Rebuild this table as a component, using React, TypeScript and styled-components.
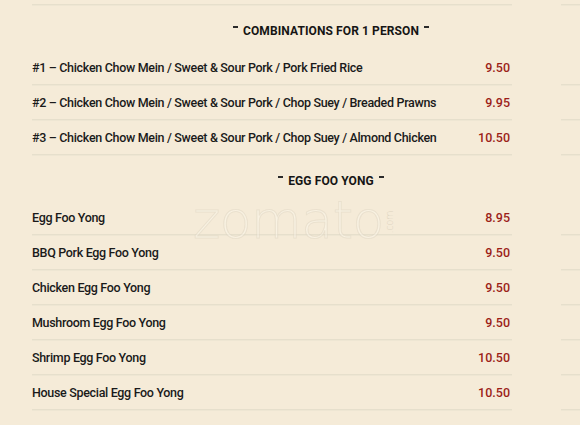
import styled, { createGlobalStyle } from 'styled-components'

const GlobalStyle = createGlobalStyle`
  html, body {
    margin: 0;
    padding: 0;
    background: #f5ebd8;
  }
  body {
    font-family: Roboto, 'Liberation Sans', sans-serif;
    overflow: hidden;
  }
`

const Page = styled.div`
  position: relative;
  width: 580px;
  height: 425px;
  padding-top: 4px;
  box-sizing: border-box;
  overflow: hidden;
`

const RuleRow = styled.div`
  display: flex;
  padding-left: 32px;
`

const Line = styled.div<{ $side?: boolean }>`
  height: 1px;
  background: #e6dfcc;
  box-shadow: 0 1px 0 #eee6d3;
  margin-bottom: 1px;
  width: ${(p) => (p.$side ? 'auto' : '480px')};
  flex: ${(p) => (p.$side ? '1' : 'none')};
  margin-left: ${(p) => (p.$side ? '49px' : '0')};
`

const Heading = styled.h2`
  margin: 0;
  height: 45px;
  box-sizing: border-box;
  padding: 18px 0 0 82px;
  text-align: center;
  font-size: 12px;
  line-height: 14px;
  font-weight: 700;
  color: #151515;
  letter-spacing: 0.1px;
`

const Dash = styled.span`
  display: inline-block;
  width: 5px;
  height: 2px;
  background: #2a2a2a;
  vertical-align: 7px;
  margin: 0 5px;
`

const Row = styled.div`
  height: 33px;
  display: flex;
  align-items: center;
  padding-left: 32px;
`

const Main = styled.div`
  width: 480px;
  display: flex;
  justify-content: space-between;
  align-items: center;
  padding-right: 2px;
  box-sizing: border-box;
`

const Name = styled.span`
  font-size: 12.5px;
  font-weight: 500;
  color: #1a1a1a;
  letter-spacing: -0.32px;
`

const Price = styled.span`
  font-size: 12.5px;
  font-weight: 500;
  color: #9c1e18;
`

const Watermark = styled.div`
  position: absolute;
  left: 193px;
  top: 200px;
  display: flex;
  align-items: flex-end;
  font-family: 'DejaVu Sans', sans-serif;
  font-size: 52px;
  line-height: 40px;
  font-weight: 300;
  letter-spacing: -0.5px;
  color: rgba(255, 250, 240, 0.45);
  -webkit-text-stroke: 1px rgba(215, 205, 185, 0.4);
  pointer-events: none;
`

const WatermarkCom = styled.span`
  font-size: 10px;
  line-height: 10px;
  writing-mode: vertical-rl;
  transform: rotate(180deg);
  margin: 0 0 6px 1px;
  -webkit-text-stroke: 0;
  color: rgba(205, 195, 175, 0.6);
`

type Item = { name: string; price: string }

const combos: Item[] = [
  { name: '#1 – Chicken Chow Mein / Sweet & Sour Pork / Pork Fried Rice', price: '9.50' },
  { name: '#2 – Chicken Chow Mein / Sweet & Sour Pork / Chop Suey / Breaded Prawns', price: '9.95' },
  { name: '#3 – Chicken Chow Mein / Sweet & Sour Pork / Chop Suey / Almond Chicken', price: '10.50' },
]

const eggFooYong: Item[] = [
  { name: 'Egg Foo Yong', price: '8.95' },
  { name: 'BBQ Pork Egg Foo Yong', price: '9.50' },
  { name: 'Chicken Egg Foo Yong', price: '9.50' },
  { name: 'Mushroom Egg Foo Yong', price: '9.50' },
  { name: 'Shrimp Egg Foo Yong', price: '10.50' },
  { name: 'House Special Egg Foo Yong', price: '10.50' },
]

function Separator() {
  return (
    <RuleRow>
      <Line />
      <Line $side />
    </RuleRow>
  )
}

function Section({ title, items }: { title: string; items: Item[] }) {
  return (
    <>
      <Heading>
        <Dash />
        {title}
        <Dash />
      </Heading>
      {items.map((item) => (
        <div key={item.name}>
          <Row>
            <Main>
              <Name>{item.name}</Name>
              <Price>{item.price}</Price>
            </Main>
          </Row>
          <Separator />
        </div>
      ))}
    </>
  )
}

export default function App() {
  return (
    <>
      <GlobalStyle />
      <Page>
        <Separator />
        <Section title="COMBINATIONS FOR 1 PERSON" items={combos} />
        <Section title="EGG FOO YONG" items={eggFooYong} />
        <Watermark>
          zomato
          <WatermarkCom>.com</WatermarkCom>
        </Watermark>
      </Page>
    </>
  )
}
